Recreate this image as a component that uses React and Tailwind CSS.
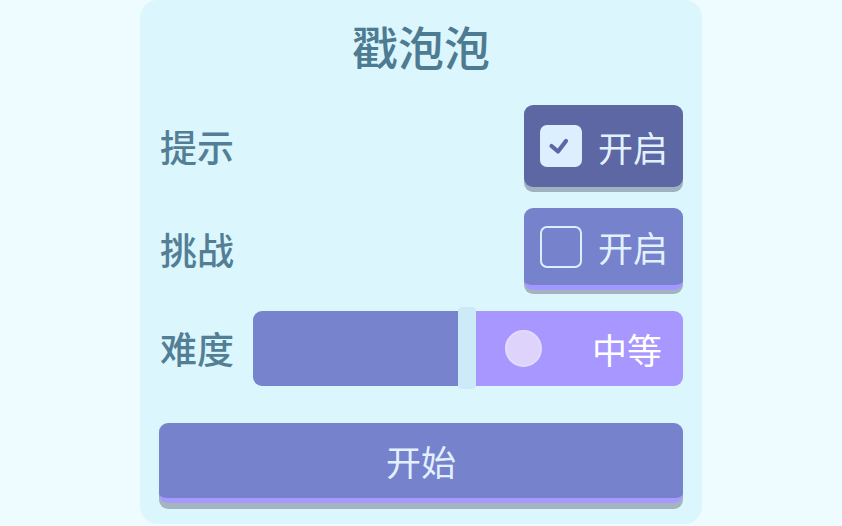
import { useState } from "react";

const font = { fontFamily: '"Noto Sans CJK SC", "Noto Sans", sans-serif' };

function CheckIcon() {
  return (
    <svg width="42" height="42" viewBox="0 0 42 42">
      <path d="M11.5 21 L18 26.5 L26 16" fill="none" stroke="#5d67a3" strokeWidth="4.2" strokeLinecap="round" strokeLinejoin="round" />
    </svg>
  );
}

function ToggleButton({ checked, onClick }) {
  // checked = pressed look (dark), unchecked = raised with purple edge
  return (
    <button
      onClick={onClick}
      className={
        checked
          ? "flex items-center w-[159px] h-[82px] pl-4 rounded-[9px] bg-[#5d67a3] shadow-[0_5px_0_#9fb2c0]"
          : "flex items-center w-[159px] h-[82px] pl-4 rounded-[9px] bg-[#7682cc] border-b-[5px] border-[#a497ff] shadow-[0_4px_0_#a3b4c0]"
      }
    >
      {checked ? (
        <span className="w-[42px] h-[42px] rounded-[7px] bg-[#dcefff] flex items-center justify-center">
          <CheckIcon />
        </span>
      ) : (
        <span className="w-[42px] h-[42px] rounded-[7px] border-2 border-[#dcefff]" />
      )}
      <span className="ml-4 text-[35px] leading-none text-[#e2f1ff]">开启</span>
    </button>
  );
}

export default function App() {
  const [hint, setHint] = useState(true);
  const [challenge, setChallenge] = useState(false);

  return (
    <div className="w-full h-[526px] bg-[#eefbff] overflow-hidden" style={font}>
      <div className="w-[562px] h-[524px] mx-auto rounded-[18px] bg-[#dcf6fe] px-[19px]">
        <div className="h-[90px] flex items-center justify-center">
          <h1 className="text-[46px] font-medium leading-none text-[#4d7b92]">戳泡泡</h1>
        </div>

        {/* 提示 */}
        <div className="mt-[15px] flex items-center justify-between h-[82px]">
          <span className="pl-px text-[37px] font-medium leading-none text-[#527f96]">提示</span>
          <ToggleButton checked={hint} onClick={() => setHint(!hint)} />
        </div>

        {/* 挑战 */}
        <div className="mt-[21px] flex items-center justify-between h-[82px]">
          <span className="pl-px text-[37px] font-medium leading-none text-[#527f96]">挑战</span>
          <ToggleButton checked={challenge} onClick={() => setChallenge(!challenge)} />
        </div>

        {/* 难度 */}
        <div className="mt-[17px] flex items-center h-[82px]">
          <span className="pl-px w-[94px] text-[37px] font-medium leading-none text-[#527f96]">难度</span>
          <div className="flex items-center flex-1 h-[82px]">
            <div className="w-[205px] h-[75px] rounded-l-[9px] bg-[#7783cd]" />
            <div className="w-[18px] h-[82px] rounded-[4px] bg-[#cdeaf8]" />
            <div className="flex-1 h-[75px] rounded-r-[9px] bg-[#a797ff] flex items-center pl-[29px] pr-[21px]">
              <span className="w-[37px] h-[37px] rounded-full bg-[#ddd3fb] border-2 border-[#e4dcff]" />
              <span className="ml-auto text-[35px] leading-none text-white">中等</span>
            </div>
          </div>
        </div>

        {/* 开始 */}
        <button className="mt-[34px] w-full h-[80px] rounded-[9px] bg-[#7682cc] border-b-[5px] border-[#a699ff] shadow-[0_6px_0_#a5b5c0] flex items-center justify-center">
          <span className="text-[35px] leading-none text-[#e2f1ff]">开始</span>
        </button>
      </div>
    </div>
  );
}
